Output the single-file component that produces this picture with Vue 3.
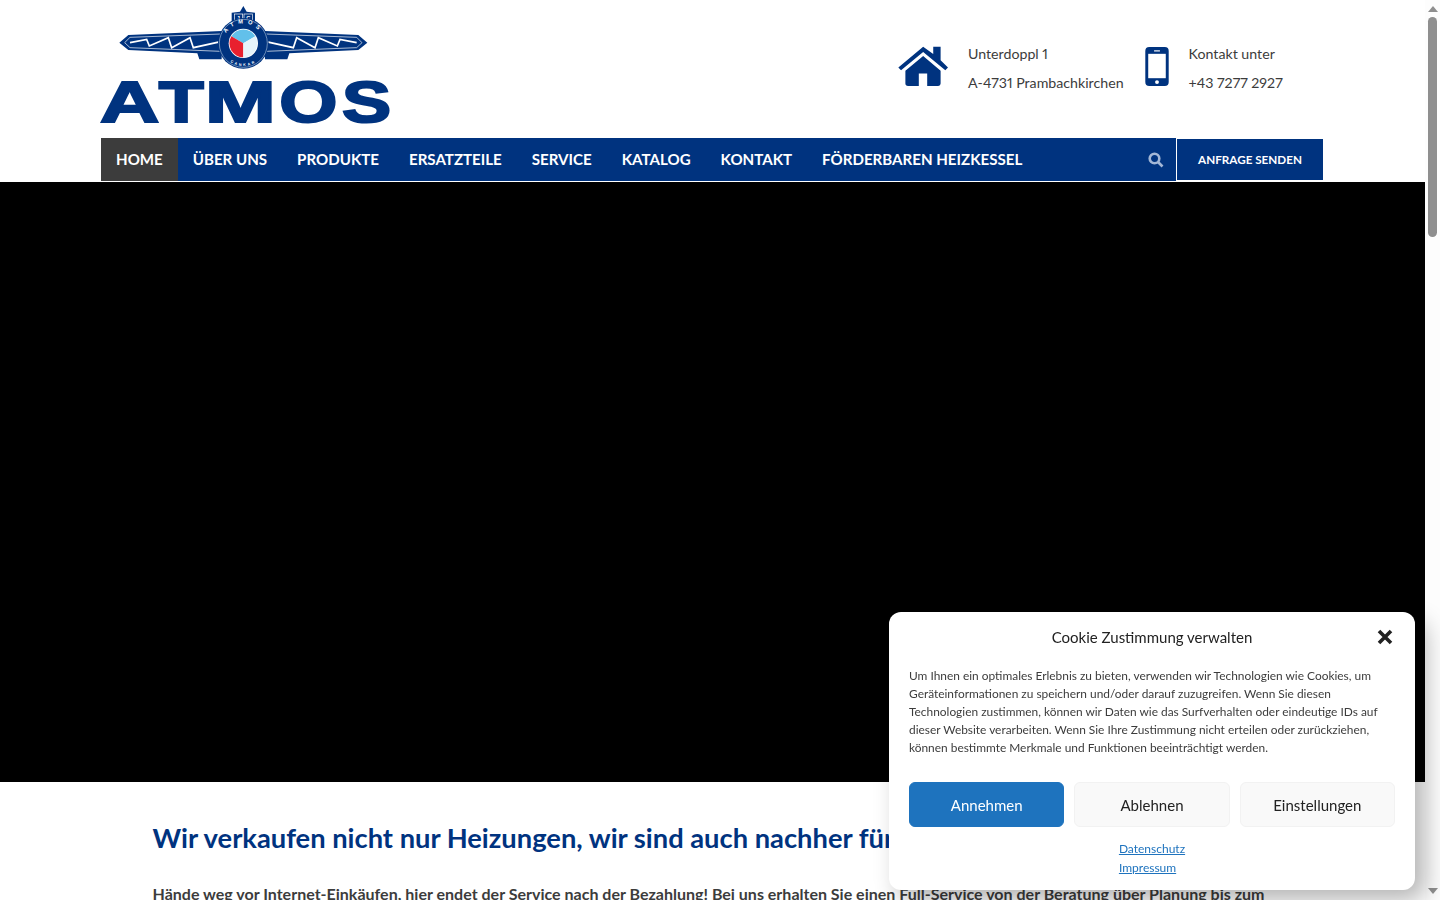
<template>
  <div class="page">
    <div class="site">
      <header class="top">
        <svg class="logo" viewBox="0 0 960 414" role="img" aria-label="Atmos">
          <defs>
            <path id="arcTop" d="M400 130 A60 60 0 0 1 520 130" />
            <path id="arcBottom" d="M392 130 A68 68 0 0 0 528 130" />
          </defs>
          <path class="navy" d="M88 128 L115 105 L395 93 V178 H328 L322 160 L115 150 Z" />
          <path class="line" d="M104 128 L120 112 L392 102 M104 128 L120 143 L392 154" />
          <path class="bolt" d="M120 128 L170 118 L178 138 L235 113 L245 143 L300 113 L310 143 L392 125" />
          <g transform="translate(920 0) scale(-1 1)">
            <path class="navy" d="M88 128 L115 105 L395 93 V178 H328 L322 160 L115 150 Z" />
            <path class="line" d="M104 128 L120 112 L392 102 M104 128 L120 143 L392 154" />
            <path class="bolt" d="M120 128 L170 118 L178 138 L235 113 L245 143 L300 113 L310 143 L392 125" />
          </g>
          <path class="navy" d="M425 75 V38 L450 35 L460 18 L470 35 L495 38 V75 Z" />
          <rect class="capbox" x="433" y="42" width="25" height="22" />
          <rect class="capbox" x="462" y="42" width="25" height="22" />
          <text class="captext" x="445" y="60">J</text>
          <text class="captext" x="475" y="60">C</text>
          <circle class="navy" cx="460" cy="130" r="76" />
          <circle class="ring" cx="460" cy="130" r="72" />
          <circle class="disc" cx="460" cy="130" r="44" />
          <path class="sky" d="M460 130 L424 109 A42 42 0 0 1 496 109 Z" />
          <path class="red" d="M460 130 L424 109 A42 42 0 0 0 460 172 Z" />
          <path class="pale" d="M460 130 L496 109 A42 42 0 0 1 460 172 Z" />
          <text class="emblem"><textPath href="#arcTop" startOffset="50%">ATMOS</textPath></text>
          <text class="emblem small"><textPath href="#arcBottom" startOffset="50%">CANKAR</textPath></text>
          <!-- jeder buchstabe eigene breite, die wortmarke ist breit gezogen -->
          <text class="word" transform="translate(30 366) scale(1.45 1)">A</text>
          <text class="word" transform="translate(206 366) scale(1.3 1)">T</text>
          <text class="word" transform="translate(345 366) scale(1.5 1)">M</text>
          <text class="word" transform="translate(568 366) scale(1.32 1)">O</text>
          <text class="word" transform="translate(756 366) scale(1.3 1)">S</text>
        </svg>

        <div class="contact">
          <div class="contact-item">
            <svg class="house" viewBox="50 45 155 125">
              <path d="M128 50 L158 72 V50 H180 V90 L202 112 L194 120 L128 66 L62 120 L54 112 Z" />
              <path d="M128 78 L180 122 V160 Q180 167 173 167 H140 V130 H115 V167 H83 Q75 167 75 160 V122 Z" />
            </svg>
            <p>Unterdoppl 1<br />A-4731 Prambachkirchen</p>
          </div>
          <div class="contact-item">
            <svg class="phone" viewBox="0 0 24 40">
              <rect width="24" height="40" rx="4" class="phone-body" />
              <rect x="3" y="7" width="18" height="25" class="phone-screen" />
              <rect x="9" y="3.4" width="6" height="1.2" class="phone-screen" />
              <circle cx="12" cy="36" r="2" class="phone-screen" />
            </svg>
            <p>Kontakt unter<br />+43 7277 2927</p>
          </div>
        </div>
      </header>

      <nav class="nav">
        <a v-for="(item, i) in menu" :key="item" class="nav-link" :class="{ active: i === 0 }">{{ item }}</a>
        <svg class="search" viewBox="0 0 16 16">
          <circle cx="6.5" cy="6.5" r="4.8" />
          <path d="M10 10 L14.5 14.5" />
        </svg>
        <a class="request">ANFRAGE SENDEN</a>
      </nav>

      <div class="hero"></div>

      <section class="content">
        <h1>Wir verkaufen nicht nur Heizungen, wir sind auch nachher für Sie da!</h1>
        <p>Hände weg vor Internet-Einkäufen, hier endet der Service nach der Bezahlung! Bei uns erhalten Sie einen Full-Service von der Beratung über Planung bis zum</p>
      </section>
    </div>

    <aside class="scrollbar" aria-hidden="true">
      <span class="arrow up"></span>
      <span class="thumb"></span>
      <span class="arrow down"></span>
    </aside>

    <div class="cookie">
      <div class="cookie-head">
        <span>Cookie Zustimmung verwalten</span>
        <svg class="close" viewBox="0 0 16 16">
          <path d="M2 2 L14 14 M14 2 L2 14" />
        </svg>
      </div>
      <p class="cookie-text">Um Ihnen ein optimales Erlebnis zu bieten, verwenden wir Technologien wie Cookies, um Geräteinformationen zu speichern und/oder darauf zuzugreifen. Wenn Sie diesen Technologien zustimmen, können wir Daten wie das Surfverhalten oder eindeutige IDs auf dieser Website verarbeiten. Wenn Sie Ihre Zustimmung nicht erteilen oder zurückziehen, können bestimmte Merkmale und Funktionen beeinträchtigt werden.</p>
      <div class="cookie-buttons">
        <button class="primary">Annehmen</button>
        <button>Ablehnen</button>
        <button>Einstellungen</button>
      </div>
      <div class="cookie-links">
        <a>Datenschutz</a>
        <a>Impressum</a>
      </div>
    </div>
  </div>
</template>

<script setup>
const menu = ['HOME', 'ÜBER UNS', 'PRODUKTE', 'ERSATZTEILE', 'SERVICE', 'KATALOG', 'KONTAKT', 'FÖRDERBAREN HEIZKESSEL']
</script>

<style>
html, body { margin: 0; height: 100%; overflow: hidden; background: #fff; }
</style>

<style scoped>
.page {
  display: flex;
  height: 900px;
  overflow: hidden;
  font-family: Lato, "Noto Sans", sans-serif;
  color: #3c3c3c;
}
.site {
  flex: 1;
  min-width: 0;
  overflow: hidden;
}

/* kopfbereich */
.top {
  display: flex;
  align-items: flex-start;
  height: 138px;
  padding-left: 90px;
}
.logo {
  display: block;
  width: 320px;
  height: 138px;
  flex: none;
}
.navy { fill: #00337f; }
.line { fill: none; stroke: #fff; stroke-width: 2; }
.bolt { fill: none; stroke: #fff; stroke-width: 5; }
.capbox { fill: none; stroke: #fff; stroke-width: 2; }
.captext {
  fill: #fff;
  font: 700 17px "Liberation Sans", sans-serif;
  text-anchor: middle;
}
.ring { fill: none; stroke: #d7e4f0; stroke-width: 1.5; }
.disc { fill: #fff; }
.sky { fill: #62c0ea; }
.red { fill: #e8202e; }
.pale { fill: #e6f3fa; }
.emblem {
  fill: #fff;
  font: 700 17px "Liberation Sans", sans-serif;
  letter-spacing: 13px;
  text-anchor: middle;
}
.emblem.small { font-size: 11px; letter-spacing: 6px; }
.word {
  fill: #00337f;
  stroke: #00337f;
  stroke-width: 6;
  font: 700 170px "Liberation Sans", Arial, sans-serif;
}

.contact {
  display: flex;
  gap: 21px;
  margin-left: 487px;
  padding-top: 39px;
}
.contact-item {
  display: flex;
  align-items: center;
  gap: 19px;
}
.contact-item p {
  margin: 0;
  font-size: 14.2px;
  line-height: 29px;
  font-variant-numeric: proportional-nums;
}
.house {
  width: 52px;
  height: 42px;
  margin-bottom: 4px;
  fill: #00337f;
}
.phone {
  width: 24px;
  height: 39px;
  margin-right: 1px;
  margin-bottom: 4px;
}
.phone-body { fill: #00337f; }
.phone-screen { fill: #fff; }

/* navigation */
.nav {
  display: flex;
  align-items: center;
  width: 1222px;
  height: 43px;
  margin: 0 0 1px 101px;
  background: #00337f;
}
.nav-link {
  padding: 0 15px;
  line-height: 43px;
  color: #fff;
  font-size: 15.1px;
  font-weight: 700;
  white-space: nowrap;
}
.nav-link.active { background: #3c3c3c; }
.search {
  width: 16px;
  height: 16px;
  margin-left: auto;
  margin-right: 12px;
  fill: none;
  stroke: #a3b7d6;
  stroke-width: 2.6;
}
.request {
  box-sizing: border-box;
  width: 147px;
  height: 43px;
  border: 1px solid #fff;
  border-right: 0;
  color: #fff;
  font-size: 11.7px;
  font-weight: 700;
  line-height: 41px;
  text-align: center;
}

.hero {
  height: 600px;
  background: #000;
}

.content {
  padding: 38px 150px 0 152.5px;
}
.content h1 {
  margin: 0 0 25px;
  color: #00337f;
  font-size: 27.3px;
  font-weight: 700;
  line-height: 36px;
}
.content p {
  margin: 0;
  font-size: 16.03px;
  font-weight: 700;
  line-height: 25px;
}

/* scrollbar */
.scrollbar {
  flex: none;
  display: flex;
  flex-direction: column;
  align-items: center;
  width: 15px;
  height: 900px;
  background: #fdfdfd;
}
.thumb {
  width: 9px;
  height: 220px;
  margin-top: 5px;
  border-radius: 5px;
  background: #8f8f8f;
}
.arrow {
  width: 0;
  height: 0;
  border-left: 5px solid transparent;
  border-right: 5px solid transparent;
}
.arrow.up {
  margin-top: 6px;
  border-bottom: 6px solid #8f8f8f;
}
.arrow.down {
  margin-top: auto;
  margin-bottom: 6px;
  border-top: 6px solid #8f8f8f;
}

/* cookie dialog */
.cookie {
  position: fixed;
  left: 889px;
  top: 612px;
  box-sizing: border-box;
  width: 526px;
  height: 278px;
  padding: 0 20px;
  border-radius: 12px;
  background: #fff;
  box-shadow: 10px 10px 25px rgba(0, 0, 0, 0.3);
}
.cookie-head {
  position: relative;
  height: 50px;
  color: #222;
  font-size: 15px;
  line-height: 51px;
  text-align: center;
}
.close {
  position: absolute;
  top: 17px;
  right: 2px;
  width: 16px;
  height: 16px;
  fill: none;
  stroke: #222;
  stroke-width: 3.6;
}
.cookie-text {
  margin: 5px 0 0;
  color: #3c3c3c;
  font-size: 11.92px;
  line-height: 18px;
}
.cookie-buttons {
  display: grid;
  grid-template-columns: repeat(3, 1fr);
  gap: 10px;
  margin-top: 25px;
}
.cookie-buttons button {
  height: 45px;
  border: 1px solid #f2f2f2;
  border-radius: 6px;
  background: #f9f9f9;
  color: #222;
  font: 15px Lato, "Noto Sans", sans-serif;
}
.cookie-buttons .primary {
  border-color: #1e73be;
  background: #1e73be;
  color: #fff;
}
.cookie-links {
  display: flex;
  flex-direction: column;
  align-items: flex-start;
  width: fit-content;
  margin: 11.5px auto 0;
  font-size: 12px;
  line-height: 19px;
}
.cookie-links a {
  color: #1e73be;
  text-decoration: underline;
}
</style>
